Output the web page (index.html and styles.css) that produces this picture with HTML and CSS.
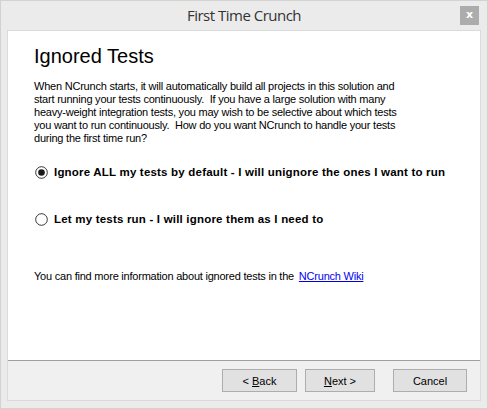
FILE: index.html
```html
<!DOCTYPE html>
<html>
<head>
<meta charset="utf-8">
<link rel="stylesheet" href="styles.css">
</head>
<body>
<div class="window">
  <div class="titlebar">
    <span class="title">First Time Crunch</span>
    <span class="close">x</span>
  </div>
  <div class="frame">
    <div class="panel">
      <h1 class="heading">Ignored Tests</h1>
      <p class="intro">When NCrunch starts, it will automatically build all projects in this solution and<br>start running your tests continuously.&nbsp; If you have a large solution with many<br>heavy-weight integration tests, you may wish to be selective about which tests<br>you want to run continuously.&nbsp; How do you want NCrunch to handle your tests<br>during the first time run?</p>
      <div class="option first">
        <svg class="radio" width="13" height="13" viewBox="0 0 13 13"><circle cx="6.5" cy="6.5" r="5.8" fill="#fff" stroke="#333" stroke-width="1"/><circle cx="6.5" cy="6.5" r="3.3" fill="#1a1a1a"/></svg>
        <span class="label">Ignore ALL my tests by default - I will unignore the ones I want to run</span>
      </div>
      <div class="option second">
        <svg class="radio" width="13" height="13" viewBox="0 0 13 13"><circle cx="6.5" cy="6.5" r="5.8" fill="#fff" stroke="#333" stroke-width="1"/></svg>
        <span class="label">Let my tests run - I will ignore them as I need to</span>
      </div>
      <p class="more">You can find more information about ignored tests in the <a class="link" href="#">NCrunch Wiki</a></p>
    </div>
    <div class="footer">
      <button class="btn back">&lt; <u>B</u>ack</button>
      <button class="btn next"><u>N</u>ext &gt;</button>
      <button class="btn cancel">Cancel</button>
    </div>
  </div>
</div>
</body>
</html>
```
FILE: styles.css
```css
html, body {
  margin: 0;
  padding: 0;
  background: #ebebeb;
}
.window {
  box-sizing: border-box;
  width: 488px;
  height: 409px;
  background: #ebebeb;
  border: 1px solid #d2d2d2;
  display: flex;
  flex-direction: column;
  font-family: "Liberation Sans", Arial, sans-serif;
  font-size: 11px;
  color: #000;
}
.titlebar {
  height: 29px;
  display: flex;
  align-items: center;
  justify-content: center;
  position: relative;
}
.title {
  font-family: "Open Sans", "Noto Sans", sans-serif;
  font-size: 15px;
  letter-spacing: -0.5px;
  color: #333;
  margin-top: -1px;
}
.close {
  position: absolute;
  left: 459px;
  top: 5px;
  width: 19px;
  height: 19px;
  background: #acacac;
  color: #fff;
  font-family: "DejaVu Sans", sans-serif;
  font-weight: bold;
  font-size: 11px;
  line-height: 17px;
  text-align: center;
}
.frame {
  margin: 0 6px 0 6px;
  border: 1px solid #dadada;
  display: flex;
  flex-direction: column;
}
.panel {
  background: #fff;
  height: 330px;
  box-sizing: border-box;
  padding: 13px 0 0 26px;
  border-bottom: 1px solid #a0a0a0;
  letter-spacing: -0.22px;
}
.heading {
  margin: 0;
  font-weight: normal;
  font-size: 20px;
  line-height: 24px;
  letter-spacing: 0;
}
.intro {
  margin: 12px 0 0 0;
  line-height: 13px;
}
.option {
  display: flex;
  align-items: center;
  height: 13px;
  line-height: 13px;
}
.option.first {
  margin-top: 21px;
}
.option.second {
  margin-top: 34px;
}
.radio {
  margin: 0 6px 0 1px;
  flex: none;
}
.label {
  font-weight: bold;
  font-size: 11.5px;
  letter-spacing: 0.2px;
}
.more {
  margin: 44px 0 0 0;
  line-height: 13px;
}
.link {
  color: #0000ee;
  margin-left: 2px;
}
.footer {
  height: 39px;
  background: #f0f0f0;
  display: flex;
  align-items: center;
  justify-content: flex-end;
  padding-right: 13px;
}
.btn {
  height: 23px;
  background: #e1e1e1;
  border: 1px solid #adadad;
  font-family: "Liberation Sans", Arial, sans-serif;
  font-size: 11px;
  color: #000;
  padding: 0;
  margin: 0;
}
.back {
  width: 75px;
}
.next {
  width: 70px;
  margin-left: 8px;
}
.cancel {
  width: 74px;
  margin-left: 18px;
}
```
